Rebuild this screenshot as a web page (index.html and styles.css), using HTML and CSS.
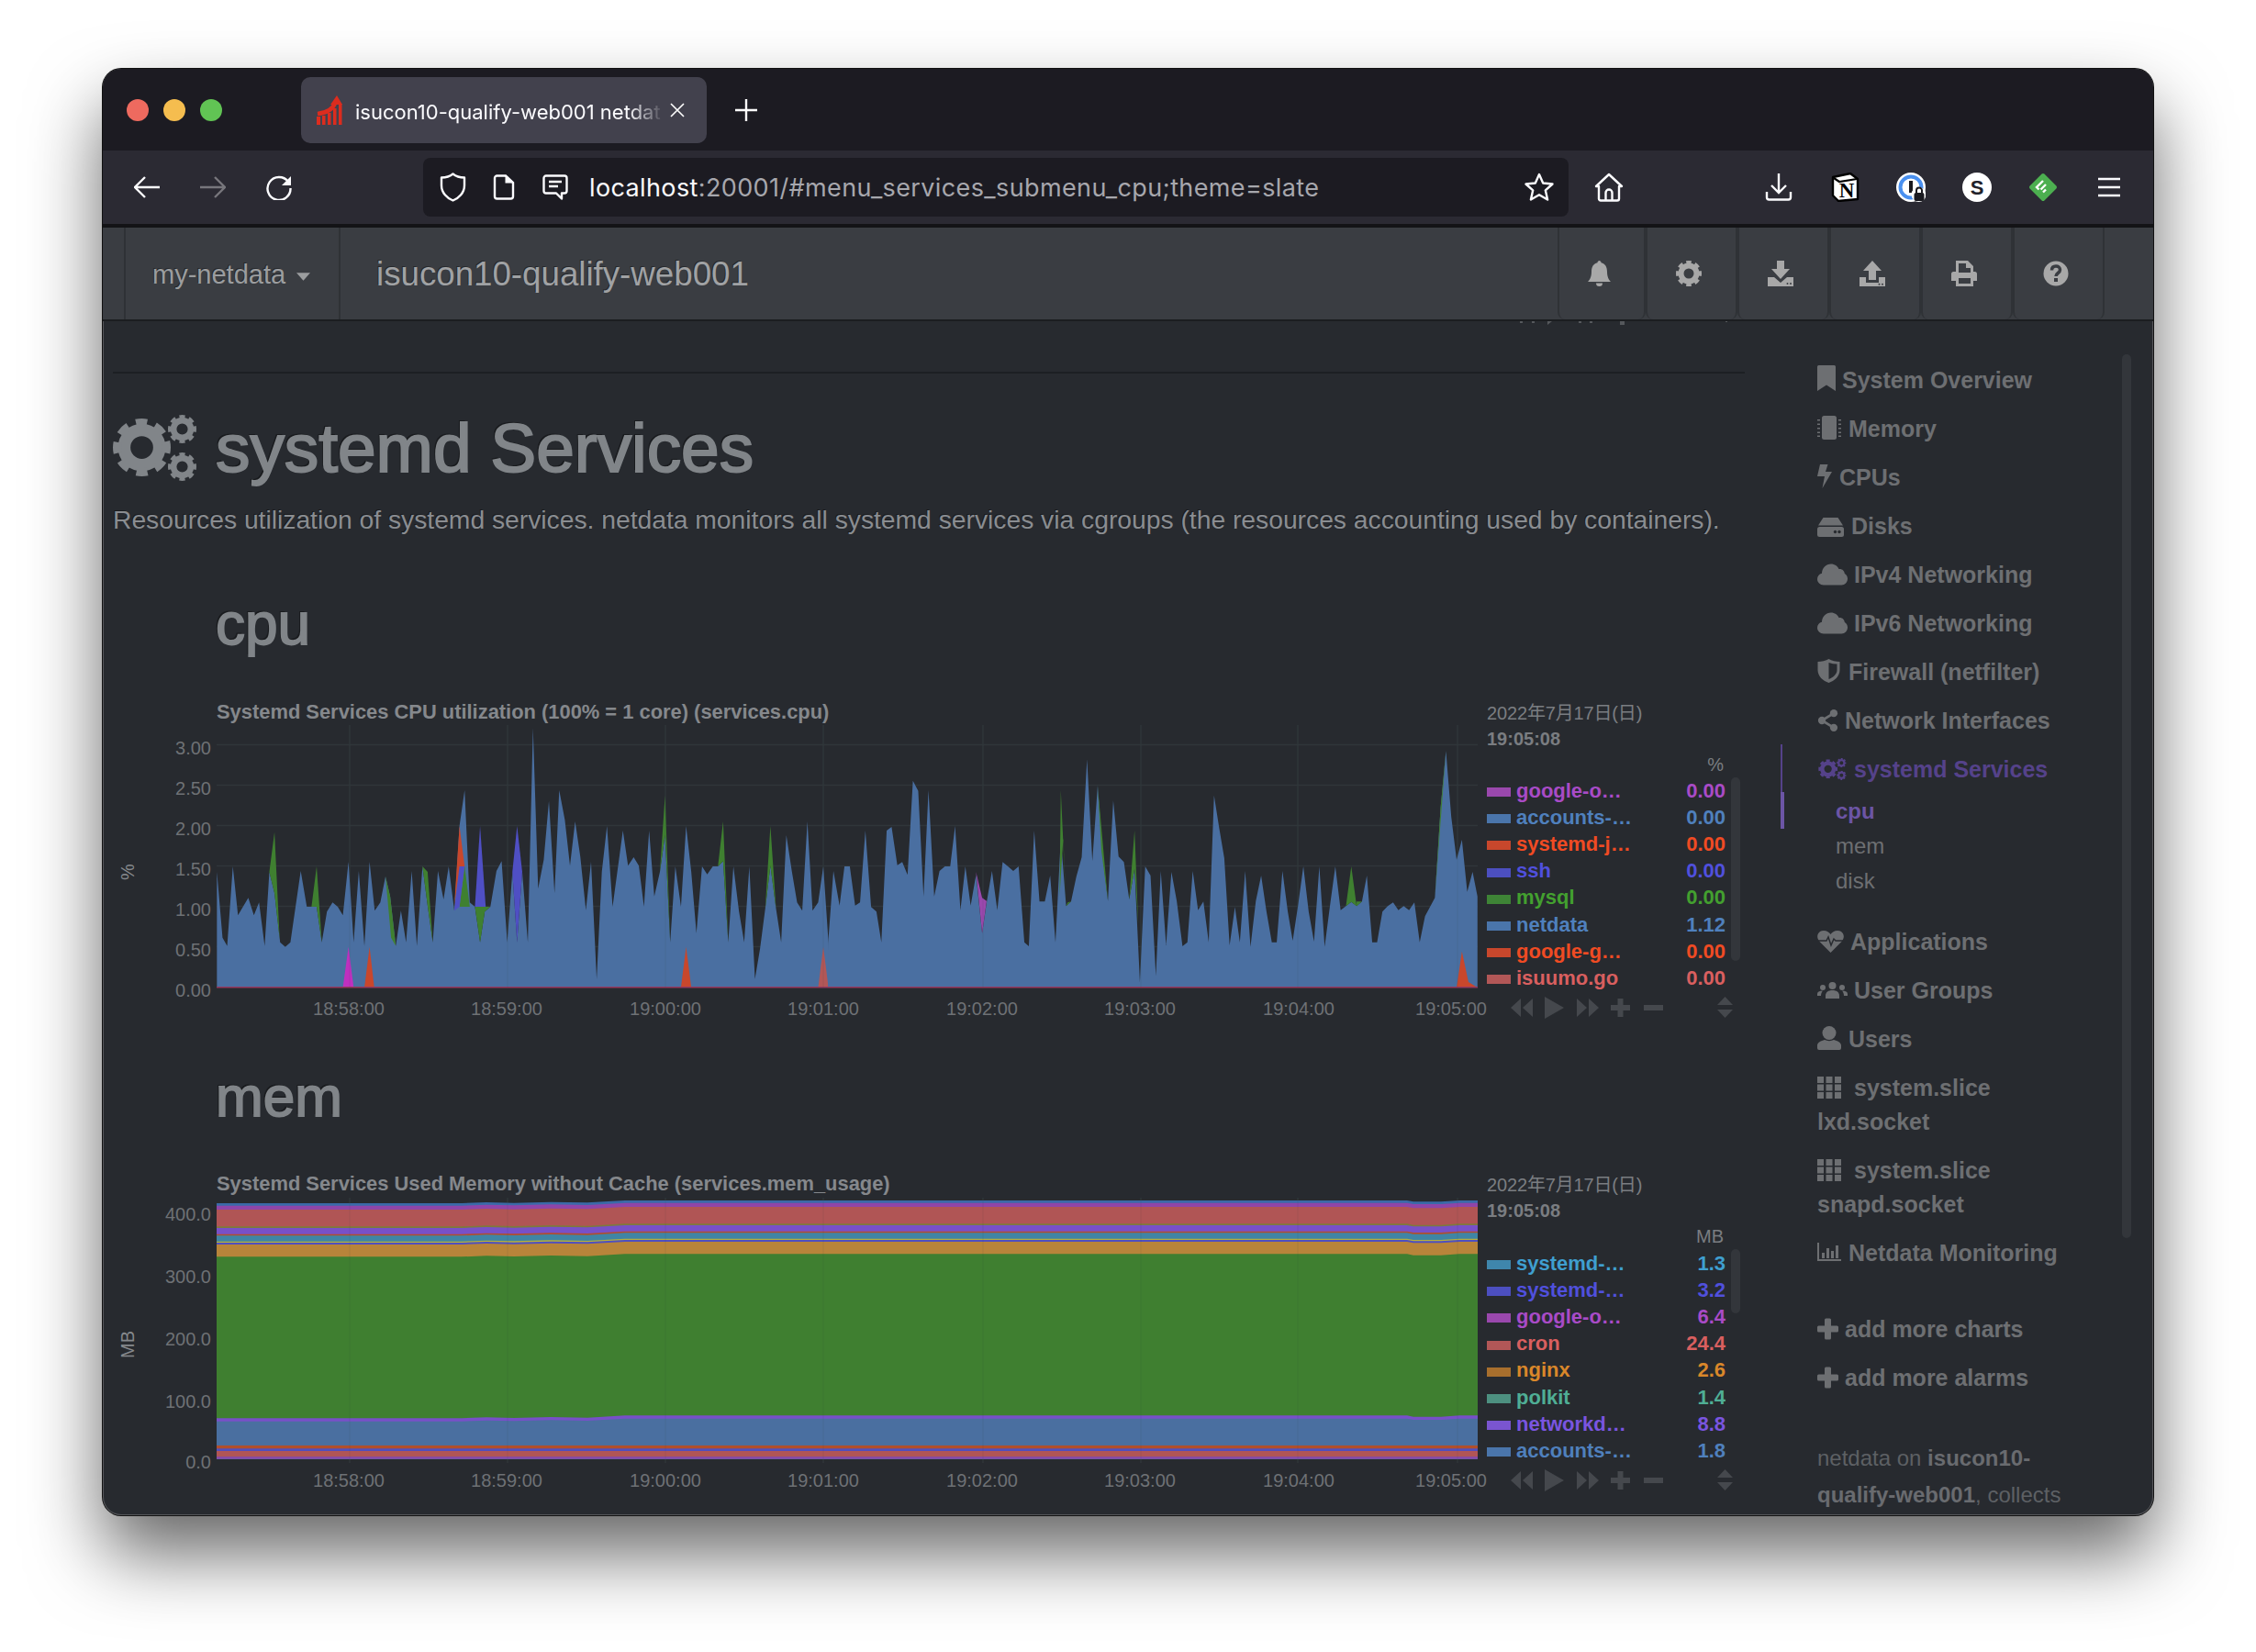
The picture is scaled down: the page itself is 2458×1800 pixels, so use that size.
FILE: index.html
```html
<!DOCTYPE html>
<html lang="en">
<head>
<meta charset="utf-8">
<title>isucon10-qualify-web001 netdata dashboard</title>
<link rel="stylesheet" href="styles.css">
</head>
<body>
<svg class="defs" xmlns="http://www.w3.org/2000/svg">
  <symbol id="i-cog" viewBox="0 0 28 28">
    <circle cx="14" cy="14" r="8.5" fill="none" stroke="currentColor" stroke-width="6"/>
    <circle cx="14" cy="14" r="12" fill="none" stroke="currentColor" stroke-width="4" pathLength="64" stroke-dasharray="4.6 3.4" stroke-dashoffset="2.3"/>
  </symbol>
  <symbol id="i-cogs" viewBox="0 0 92 72">
    <use href="#i-cog" x="0" y="4" width="63" height="63"/>
    <use href="#i-cog" x="59" y="0" width="33" height="31"/>
    <use href="#i-cog" x="59" y="41" width="33" height="31"/>
  </symbol>
  <symbol id="i-bookmark" viewBox="0 0 20 28"><path fill="currentColor" d="M0 1.5A1.5 1.5 0 0 1 1.500 0h17A1.500 1.500 0 0 1 20 1.500V28l-10-6.500L0 28z"/></symbol>
  <symbol id="i-chip" viewBox="0 0 26 26"><rect x="5" y="0" width="16" height="26" rx="2.500" fill="currentColor"/><path fill="currentColor" d="M0 4h3v1.500H0zM0 8.500h3V10H0zM0 13h3v1.500H0zM0 17.500h3V19H0zM0 21.500h3V23H0zM23 4h3v1.500h-3zM23 8.500h3V10h-3zM23 13h3v1.500h-3zM23 17.500h3V19h-3zM23 21.500h3V23h-3z"/></symbol>
  <symbol id="i-bolt" viewBox="0 0 16 26"><path fill="currentColor" d="M3 0h8.500L9 8h7L5.500 26 8 13H0z"/></symbol>
  <symbol id="i-hdd" viewBox="0 0 29 21"><path fill="currentColor" d="M6.500 0h16L28 8.500H1z"/><rect y="10" width="29" height="11" rx="2.500" fill="currentColor"/><circle cx="19.500" cy="15.500" r="1.700" fill="#272a2f"/><circle cx="24" cy="15.500" r="1.700" fill="#272a2f"/></symbol>
  <symbol id="i-cloud" viewBox="0 0 33 23"><path fill="currentColor" d="M7 23C3 23 0 20 0 16.500 0 13.500 2 11 5 10.300 5 4.500 9.500 0 15 0c4 0 7 2.300 8.500 5.500 3.500-.5 6 1.800 6.300 5C31.700 11.500 33 13.500 33 16c0 4-3 7-6.500 7z"/></symbol>
  <symbol id="i-shield" viewBox="0 0 24 26"><path fill="currentColor" fill-rule="evenodd" d="M12 0c3 2 8 3 12 3v9c0 7-6 12-12 14C6 24 0 19 0 12V3c4 0 9-1 12-3zm0 4v18c5-2 9-5.500 9-10V5.500c-3 0-6-.5-9-1.500z"/></symbol>
  <symbol id="i-share" viewBox="0 0 23 26"><circle cx="18.500" cy="4.500" r="4.500" fill="currentColor"/><circle cx="4.500" cy="13" r="4.500" fill="currentColor"/><circle cx="18.500" cy="21.500" r="4.500" fill="currentColor"/><path d="M18.500 4.500 4.500 13l14 8.500" fill="none" stroke="currentColor" stroke-width="3"/></symbol>
  <symbol id="i-heart" viewBox="0 0 29 24"><path fill="currentColor" d="M14.500 24 2 11.500C-2 6 1 0 7 0c3.500 0 6 2 7.500 4C16 2 18.500 0 22 0c6 0 9 6 5 11.500z"/><path d="M1 11h9l2-4 3 9 3-7 2 2h8" fill="none" stroke="#272a2f" stroke-width="1.500"/></symbol>
  <symbol id="i-users" viewBox="0 0 33 18"><g fill="currentColor"><circle cx="16.500" cy="4" r="4"/><path d="M9 18v-3c0-4 3-6 7.500-6S24 11 24 15v3z"/><circle cx="6" cy="6" r="3"/><path d="M0 15v-2c0-2 2-3.500 6-3.500-1 1-2 3-2 5.500z"/><circle cx="27" cy="6" r="3"/><path d="M33 15v-2c0-2-2-3.500-6-3.500 1 1 2 3 2 5.500z"/></g></symbol>
  <symbol id="i-user" viewBox="0 0 26 26"><g fill="currentColor"><circle cx="13" cy="7.500" r="7.500"/><path d="M0 24v-3c0-3 4-5 8-6 3 1.500 7 1.500 10 0 4 1 8 3 8 6v3a2 2 0 0 1-2 2H2a2 2 0 0 1-2-2z"/></g></symbol>
  <symbol id="i-th" viewBox="0 0 26 24"><path fill="currentColor" d="M0 0h7v7H0zM9.500 0h7v7h-7zM19 0h7v7h-7zM0 8.500h7v7H0zM9.500 8.500h7v7h-7zM19 8.500h7v7h-7zM0 17h7v7H0zM9.500 17h7v7h-7zM19 17h7v7h-7z"/></symbol>
  <symbol id="i-bars" viewBox="0 0 26 20"><path fill="currentColor" d="M0 0h2v18h24v2H0zM5 11h3v6H5zM10 6h3v11h-3zM15 9h3v8h-3zM20 3h3v14h-3z"/></symbol>
  <symbol id="i-plus" viewBox="0 0 23 23"><path fill="currentColor" d="M8 1.500A1.500 1.500 0 0 1 9.500 0h4A1.500 1.500 0 0 1 15 1.500V8h6.500A1.500 1.500 0 0 1 23 9.500v4a1.500 1.500 0 0 1-1.500 1.500H15v6.500a1.500 1.500 0 0 1-1.500 1.500h-4A1.500 1.500 0 0 1 8 21.500V15H1.500A1.500 1.500 0 0 1 0 13.500v-4A1.500 1.500 0 0 1 1.500 8H8z"/></symbol>
  <symbol id="i-bell" viewBox="0 0 25 28"><path fill="currentColor" d="M12.500 0c1 0 2 1 2 2.200C19 3 21 7 21 12c0 6 2 9 4 11H0c2-2 4-5 4-11C4 7 6 3 10.500 2.200 10.500 1 11.500 0 12.500 0zM9 24.500h7a3.500 3.500 0 0 1-7 0z"/></symbol>
  <symbol id="i-down" viewBox="0 0 28 28"><path fill="currentColor" d="M10 0h8v9h6L14 20 4 9h6zM0 18h7l7 6 7-6h7v10H0z"/><circle cx="21.500" cy="25" r="1" fill="#3a3d42"/><circle cx="25" cy="25" r="1" fill="#3a3d42"/></symbol>
  <symbol id="i-up" viewBox="0 0 28 28"><path fill="currentColor" d="M14 0l10 11h-6v10h-8V11H4zM0 18h7v6h14v-6h7v10H0z"/><circle cx="21.500" cy="25.800" r="1" fill="#3a3d42"/><circle cx="25" cy="25.800" r="1" fill="#3a3d42"/></symbol>
  <symbol id="i-print" viewBox="0 0 28 28"><path fill="currentColor" fill-rule="evenodd" d="M5 0h13l6 6v6h1.500A2.500 2.500 0 0 1 28 14.500V22h-4v6H5v-6H0v-7.500A2.500 2.500 0 0 1 2.500 12H5zm3 3v10h13V8h-5V3zm0 16v6h13v-6z"/></symbol>
  <symbol id="i-help" viewBox="0 0 27 28"><circle cx="13.500" cy="14" r="13.500" fill="currentColor"/><path d="M9 10.500c0-3 2-4.500 4.500-4.500S18 7.500 18 10c0 3.500-4.500 3.500-4.500 7" fill="none" stroke="#3a3d42" stroke-width="3.500"/><rect x="11.500" y="19" width="4" height="4" fill="#3a3d42"/></symbol>
  <symbol id="i-tools" viewBox="0 0 270 24"><path fill="currentColor" d="M37 2 26 12l11 10zM50 2 39 12l11 10zM63 0l21 12-21 12zM98 2l11 10-11 10zM111 2l11 10-11 10zM142.500 2h6v7h7.500v6h-7.500v7h-6v-7H135V9h7.500zM171 9h21v6h-21zM259.500 0 268 9h-17zM251 14h17l-8.500 9z"/></symbol>
</svg>

<div class="window">
  <div class="tabbar">
    <div class="lights"><span class="light red"></span><span class="light yellow"></span><span class="light green"></span></div>
    <div class="tab">
      <svg class="favicon" viewBox="0 0 28 32"><path fill="#dc2c1e" d="M0 23h4v9H0zM6 22h3.500v10H6zM12 19h3.500v13H12zM18 14h3.500v18H18zM24 9h3.500v23H24z"/><path fill="none" stroke="#dc2c1e" stroke-width="4.500" d="M1 20c10-1 17-5 19.500-13"/><path fill="#dc2c1e" d="M22 0l6 10H15z"/></svg>
      <span class="tab-title">isucon10-qualify-web001 netdat</span>
      <svg class="tab-close" viewBox="0 0 16 16"><path d="M1 1l14 14M15 1 1 15" stroke="#fff" stroke-width="1.600" fill="none"/></svg>
    </div>
    <svg class="newtab" viewBox="0 0 24 24"><path d="M12 0v24M0 12h24" stroke="#fff" stroke-width="2.400"/></svg>
  </div>

  <div class="toolbar">
    <span class="tbtn"><svg class="s28" viewBox="0 0 28 24"><path d="M1 12h27M12 1 1 12l11 11" fill="none" stroke="#fbfbfe" stroke-width="2.400"/></svg></span>
    <span class="tbtn"><svg class="s28" viewBox="0 0 28 24"><path d="M0 12h27M16 1l11 11-11 11" fill="none" stroke="#77767c" stroke-width="2.400"/></svg></span>
    <span class="tbtn"><svg class="s28" viewBox="0 0 28 28"><path d="M24 8A12.500 12.500 0 1 0 26.500 15" fill="none" stroke="#fbfbfe" stroke-width="2.400"/><path d="M27 2v10H17z" fill="#fbfbfe"/></svg></span>
    <div class="urlbar">
      <span class="ubtn"><svg class="s-shield" viewBox="0 0 29 32"><path d="M14.500 1.500c3 2.500 8 4 12.500 4V14c0 8-6 14-12.500 16.500C8 28 2 22 2 14V5.500c4.500 0 9.500-1.500 12.500-4z" fill="none" stroke="#fbfbfe" stroke-width="2.400" stroke-linejoin="round"/></svg></span>
      <span class="ubtn"><svg class="s-page" viewBox="0 0 24 28"><path d="M2 4a2.500 2.500 0 0 1 2.500-2.500H14L22 9v15a2.500 2.500 0 0 1-2.500 2.500h-15A2.500 2.500 0 0 1 2 24z" fill="none" stroke="#fbfbfe" stroke-width="2.400"/><path d="M13.500 1.500 22 9.500h-8.500z" fill="#fbfbfe"/></svg></span>
      <span class="ubtn"><svg class="s-page2" viewBox="0 0 28 28"><path d="M4 1.500h20A2.500 2.500 0 0 1 26.500 4v14a2.500 2.500 0 0 1-2.500 2.500h-3v6l-6-6H4A2.500 2.500 0 0 1 1.500 18V4A2.500 2.500 0 0 1 4 1.500z" fill="none" stroke="#fbfbfe" stroke-width="2.400" stroke-linejoin="round"/><path d="M7 8h14M7 13h10" stroke="#fbfbfe" stroke-width="2.400"/></svg></span>
      <span class="url"><span class="url-host">localhost</span>:20001/#menu_services_submenu_cpu;theme=slate</span>
      <span class="ubtn"><svg class="s-star" viewBox="0 0 32 32"><path d="M16 2l4.200 9.500 10.300 1-7.700 6.800 2.300 10.200-9.100-5.300-9.100 5.300 2.300-10.200-7.700-6.800 10.300-1z" fill="none" stroke="#fbfbfe" stroke-width="2.400" stroke-linejoin="round"/></svg></span>
    </div>
    <span class="tbtn home"><svg class="s-star" viewBox="0 0 32 32"><path d="M16 2 30 15h-3v13.500a2 2 0 0 1-2 2H7a2 2 0 0 1-2-2V15H2z" fill="none" stroke="#fbfbfe" stroke-width="2.400" stroke-linejoin="round"/><path d="M12.500 30v-8a3.500 3.500 0 0 1 7 0v8" fill="none" stroke="#fbfbfe" stroke-width="2.400"/></svg></span>
    <span class="spacer"></span>
    <span class="tbtn"><svg class="s-star" viewBox="0 0 32 32"><path d="M16 1v21M8 14l8 8 8-8" fill="none" stroke="#fbfbfe" stroke-width="2.400"/><path d="M3 21v6a2.500 2.500 0 0 0 2.500 2.500h21A2.500 2.500 0 0 0 29 27v-6" fill="none" stroke="#fbfbfe" stroke-width="2.400"/></svg></span>
    <span class="tbtn"><svg class="s-star" viewBox="0 0 32 32"><path d="M3 5 22 1l8 6v22L9 31l-6-6z" fill="#fff" stroke="#000" stroke-width="2.400" stroke-linejoin="round"/><path d="M4 6l6 4 19-3" fill="none" stroke="#000" stroke-width="2.200"/><text class="notion-n" x="18" y="27" text-anchor="middle">N</text></svg></span>
    <span class="tbtn"><svg class="s-star" viewBox="0 0 32 32"><circle cx="16" cy="16" r="16" fill="#fff"/><circle cx="16" cy="16" r="11.500" fill="none" stroke="#4a90f0" stroke-width="4"/><rect x="14" y="9" width="4" height="13" fill="#1a1a20"/><circle cx="24.500" cy="24" r="8" fill="#fff"/><rect x="19.500" y="22" width="11" height="9" rx="2" fill="#1a1a20"/><path d="M22 22v-2.500a3 3 0 0 1 6 0V22" fill="none" stroke="#1a1a20" stroke-width="2"/></svg></span>
    <span class="tbtn"><svg class="s-star" viewBox="0 0 32 32"><circle cx="16" cy="16" r="16" fill="#fff"/><text class="s-glyph" x="16" y="23.500" text-anchor="middle">S</text></svg></span>
    <span class="tbtn"><svg class="s-star" viewBox="0 0 32 32"><path d="M16 3 29 16 16 29 3 16z" fill="#4caf50" stroke="#4caf50" stroke-width="4" stroke-linejoin="round"/><path d="M16 9l-7 7 2.500 2.500M19 13l-5.500 5.500M19 18.500l-3 3" fill="none" stroke="#fff" stroke-width="2.400"/></svg></span>
    <span class="tbtn"><svg class="s28" viewBox="0 0 28 24"><path d="M2 3h24M2 12h24M2 21h24" stroke="#fbfbfe" stroke-width="2.600"/></svg></span>
  </div>

  <nav class="navbar">
    <div class="brand">my-netdata<svg class="caret" viewBox="0 0 16 9"><path d="M0 0h16L8 9z" fill="currentColor"/></svg></div>
    <div class="hostname">isucon10-qualify-web001</div>
    <div class="navbtns">
      <span class="navbtn first"><svg class="ni ni-25"><use href="#i-bell"/></svg></span>
      <span class="navbtn"><svg class="ni"><use href="#i-cog"/></svg></span>
      <span class="navbtn"><svg class="ni"><use href="#i-down"/></svg></span>
      <span class="navbtn"><svg class="ni"><use href="#i-up"/></svg></span>
      <span class="navbtn"><svg class="ni"><use href="#i-print"/></svg></span>
      <span class="navbtn"><svg class="ni"><use href="#i-help"/></svg></span>
    </div>
  </nav>

  <div class="content">
    <main class="main">
      <svg class="clipped-bits" viewBox="0 0 240 5"><path fill="#55585c" d="M6 0h3v2H6zM19 0h3v2h-3zM36 0h5l-5 4zM70 0h3v2h-3zM82 0h3v2h-3zM115 0h5v4h-5zM230 0h2v1h-2z"/></svg>
      <hr class="rule">
      <h1 class="page-title"><svg class="cogs"><use href="#i-cogs"/></svg><span>systemd Services</span></h1>
      <p class="lead">Resources utilization of systemd services. netdata monitors all systemd services via cgroups (the resources accounting used by containers).</p>

      <h2 class="section">cpu</h2>
      <section class="chart">
        <div class="plot">
          <div class="chart-title">Systemd Services CPU utilization (100% = 1 core) (services.cpu)</div>
          <svg class="graph" viewBox="112 790 1508 320">
            <g class="grid">
              <path d="M236 811.500H1610M236 855.500H1610M236 899.500H1610M236 943.500H1610M236 987.500H1610M236 1031.500H1610M381 790V1076M553 790V1076M725 790V1076M897 790V1076M1071 790V1076M1243 790V1076M1414 790V1076M1588 790V1076"/>
            </g>
            <g transform="translate(120,760) scale(.5102,.3333)">
              <polygon class="f-blue" points="228,948 228,570 240,785 250,812 262,552 273,712 295,655 307,712 318,670 330,812 340,570 351,640 363,800 374,815 385,800 407,567 420,684 441,684 452,800 463,700 475,670 486,684 497,712 509,537 520,800 531,567 543,812 554,537 565,697 577,670 588,585 598,650 610,812 621,697 632,800 644,567 655,812 667,552 678,680 689,800 700,567 712,660 723,552 735,697 746,420 757,303 768,670 779,684 790,800 800,700 812,684 825,567 836,535 848,800 859,570 869,800 880,570 892,800 903,100 914,625 926,530 937,338 949,640 959,303 971,400 982,550 993,405 1004,520 1016,695 1027,537 1039,920 1050,570 1061,420 1073,684 1095,435 1106,550 1118,522 1129,550 1140,684 1151,435 1162,650 1174,570 1185,450 1196,800 1207,552 1219,684 1230,420 1241,570 1252,770 1264,552 1275,578 1287,552 1298,552 1309,535 1320,800 1331,552 1343,700 1354,800 1365,552 1377,920 1388,820 1399,690 1410,550 1422,690 1433,800 1444,450 1456,570 1467,670 1478,697 1489,405 1500,697 1512,670 1523,552 1534,800 1538,948"/>
              <polygon class="f-green" points="340,570 351,440 362,790 351,640"/>
              <polygon class="f-green" points="430,684 441,552 452,800 441,684"/>
              <polygon class="f-green" points="588,585 598,650 610,812 600,785"/>
              <polygon class="f-green" points="667,552 678,570 689,800 678,680"/>
              <polygon class="f-green" points="746,684 757,552 768,684"/>
              <polygon class="f-green" points="779,684 812,684 800,700 790,800"/>
              <polygon class="f-green" points="1174,570 1185,320 1196,800 1185,450"/>
              <polygon class="f-green" points="1298,552 1309,405 1320,800 1309,535"/>
              <polygon class="f-green" points="1399,690 1410,420 1422,690 1410,550"/>
              <polygon class="f-violet" points="779,684 790,420 802,684"/>
              <polygon class="f-violet" points="859,570 869,420 880,570 869,800"/>
              <polygon class="f-violet" points="735,697 746,552 757,552 746,684"/>
              <polygon class="f-red" points="735,680 746,420 757,552 746,552"/>
              <polygon class="f-magenta" points="497,948 509,815 520,948"/>
              <polygon class="f-red" points="543,948 554,815 564,948"/>
              <polygon class="f-red" points="1219,948 1230,815 1241,948"/>
              <polygon class="f-rose" points="1512,948 1523,815 1534,948"/>
            </g>
            <g transform="translate(900,780) scale(.4464,.3333)">
              <polygon class="f-blue" points="5,888 5,745 18,507 33,620 45,492 58,492 71,620 83,610 96,375 110,625 123,640 135,740 148,375 160,363 174,488 186,478 199,520 212,212 225,245 238,590 250,243 264,590 277,507 290,492 303,492 315,360 328,635 340,492 353,620 366,520 381,710 392,610 405,507 418,635 431,478 444,492 457,507 470,492 484,740 495,753 508,375 521,607 534,607 547,522 560,740 573,400 586,622 598,607 611,525 624,462 637,142 650,475 663,228 675,450 688,605 701,277 714,460 727,478 740,600 753,500 766,870 779,492 792,522 805,850 817,507 830,750 843,510 856,605 870,753 882,740 895,507 908,635 921,607 934,740 947,260 960,370 972,465 985,750 998,625 1010,740 1023,507 1036,755 1049,605 1062,522 1075,640 1088,740 1100,740 1114,507 1127,640 1139,735 1152,620 1165,492 1178,640 1191,738 1204,492 1217,755 1230,620 1243,492 1256,635 1269,622 1282,608 1295,622 1308,607 1320,522 1333,740 1345,740 1358,640 1371,622 1384,610 1397,635 1410,622 1423,635 1436,610 1449,740 1462,655 1486,595 1500,300 1513,115 1526,330 1539,470 1552,405 1565,575 1578,510 1590,590 1590,888"/>
              <polygon class="f-green" points="570,590 573,243 586,622 579,400"/>
              <polygon class="f-green" points="663,228 688,605 672,440"/>
              <polygon class="f-green" points="740,600 753,375 762,680 753,500"/>
              <polygon class="f-green" points="1269,622 1282,492 1295,622 1282,608"/>
              <polygon class="f-green" points="1295,622 1295,607 1308,607"/>
              <polygon class="f-green" points="586,622 590,610 598,607"/>
              <polygon class="f-green" points="1486,595 1513,115 1500,300"/>
              <polygon class="f-violet2" points="366,510 381,595 392,605 381,710"/>
              <polygon class="f-red" points="1539,888 1552,770 1568,870 1590,888"/>
            </g>
            <rect class="zero-line" x="236" y="1075" width="1374" height="1.500"/>
            <g class="grid grid-over"><path d="M381 790V1076M553 790V1076M725 790V1076M897 790V1076M1071 790V1076M1243 790V1076M1414 790V1076M1588 790V1076"/></g>
            <g class="ax">
              <text class="ax-y" x="230" y="822">3.00</text><text class="ax-y" x="230" y="866">2.50</text><text class="ax-y" x="230" y="910">2.00</text><text class="ax-y" x="230" y="954">1.50</text><text class="ax-y" x="230" y="998">1.00</text><text class="ax-y" x="230" y="1042">0.50</text><text class="ax-y" x="230" y="1086">0.00</text>
              <text class="ax-x" x="380" y="1106">18:58:00</text><text class="ax-x" x="552" y="1106">18:59:00</text><text class="ax-x" x="725" y="1106">19:00:00</text><text class="ax-x" x="897" y="1106">19:01:00</text><text class="ax-x" x="1070" y="1106">19:02:00</text><text class="ax-x" x="1242" y="1106">19:03:00</text><text class="ax-x" x="1415" y="1106">19:04:00</text><text class="ax-x" x="1581" y="1106">19:05:00</text>
              <text class="ax-unit" transform="translate(146,950) rotate(-90)">%</text>
            </g>
          </svg>
        </div>
        <aside class="legend">
          <div class="legend-date">2022年7月17日(日)</div>
          <div class="legend-time">19:05:08</div>
          <div class="legend-unit">%</div>
          <div class="legend-rows">
            <div class="row c-google"><i></i><span>google-o…</span><b>0.00</b></div>
            <div class="row c-blue"><i></i><span>accounts-…</span><b>0.00</b></div>
            <div class="row c-red"><i></i><span>systemd-j…</span><b>0.00</b></div>
            <div class="row c-indigo"><i></i><span>ssh</span><b>0.00</b></div>
            <div class="row c-green"><i></i><span>mysql</span><b>0.00</b></div>
            <div class="row c-blue"><i></i><span>netdata</span><b>1.12</b></div>
            <div class="row c-red"><i></i><span>google-g…</span><b>0.00</b></div>
            <div class="row c-rose"><i></i><span>isuumo.go</span><b>0.00</b></div>
          </div>
          <svg class="tools"><use href="#i-tools"/></svg>
          <span class="legend-scroll tall"></span>
        </aside>
      </section>

      <h2 class="section">mem</h2>
      <section class="chart">
        <div class="plot">
          <div class="chart-title">Systemd Services Used Memory without Cache (services.mem_usage)</div>
          <svg class="graph" viewBox="112 1305 1508 320">
            <defs>
              <clipPath id="memclip"><rect x="236" y="0" width="1374" height="932"/></clipPath>
              <polygon id="band" points="236,9 503,9 530,6 560,8 600,5 640,7 681,0 1533,0 1540,4 1570,4 1590,0 1610,0 1610,1000 236,1000"/>
            </defs>
            <g class="grid"><path d="M381 1306V1595M553 1306V1595M725 1306V1595M897 1306V1595M1071 1306V1595M1243 1306V1595M1414 1306V1595M1588 1306V1595"/></g>
            <g transform="translate(0,1280) scale(1,.3333)">
              <g clip-path="url(#memclip)">
                <use href="#band" y="87" class="b1"/>
                <use href="#band" y="95" class="b2"/>
                <use href="#band" y="108" class="b3"/>
                <use href="#band" y="163" class="b4"/>
                <use href="#band" y="168" class="b5"/>
                <use href="#band" y="188" class="b6"/>
                <use href="#band" y="193" class="b7"/>
                <use href="#band" y="212" class="b8"/>
                <use href="#band" y="216" class="b9"/>
                <use href="#band" y="222" class="b10"/>
                <use href="#band" y="262" class="b11"/>
                <use href="#band" y="790" class="b5"/>
                <use href="#band" y="800" class="b12"/>
                <rect class="b6" x="236" y="888" width="1374" height="12"/>
                <rect class="b9" x="236" y="898" width="1374" height="8"/>
                <rect class="b3" x="236" y="906" width="1374" height="19"/>
                <rect class="b2" x="236" y="925" width="1374" height="7"/>
              </g>
            </g>
            <g class="grid grid-over"><path d="M381 1306V1591M553 1306V1591M725 1306V1591M897 1306V1591M1071 1306V1591M1243 1306V1591M1414 1306V1591M1588 1306V1591"/></g>
            <g class="ax">
              <text class="ax-y" x="230" y="1331">400.0</text><text class="ax-y" x="230" y="1399">300.0</text><text class="ax-y" x="230" y="1467">200.0</text><text class="ax-y" x="230" y="1535">100.0</text><text class="ax-y" x="230" y="1601">0.0</text>
              <text class="ax-x" x="380" y="1621">18:58:00</text><text class="ax-x" x="552" y="1621">18:59:00</text><text class="ax-x" x="725" y="1621">19:00:00</text><text class="ax-x" x="897" y="1621">19:01:00</text><text class="ax-x" x="1070" y="1621">19:02:00</text><text class="ax-x" x="1242" y="1621">19:03:00</text><text class="ax-x" x="1415" y="1621">19:04:00</text><text class="ax-x" x="1581" y="1621">19:05:00</text>
              <text class="ax-unit" transform="translate(146,1466) rotate(-90)">MB</text>
            </g>
          </svg>
        </div>
        <aside class="legend">
          <div class="legend-date">2022年7月17日(日)</div>
          <div class="legend-time">19:05:08</div>
          <div class="legend-unit">MB</div>
          <div class="legend-rows">
            <div class="row c-sky"><i></i><span>systemd-…</span><b>1.3</b></div>
            <div class="row c-indigo"><i></i><span>systemd-…</span><b>3.2</b></div>
            <div class="row c-google"><i></i><span>google-o…</span><b>6.4</b></div>
            <div class="row c-rose"><i></i><span>cron</span><b>24.4</b></div>
            <div class="row c-orange"><i></i><span>nginx</span><b>2.6</b></div>
            <div class="row c-teal"><i></i><span>polkit</span><b>1.4</b></div>
            <div class="row c-violet"><i></i><span>networkd…</span><b>8.8</b></div>
            <div class="row c-blue"><i></i><span>accounts-…</span><b>1.8</b></div>
          </div>
          <svg class="tools"><use href="#i-tools"/></svg>
          <span class="legend-scroll short"></span>
        </aside>
      </section>
    </main>

    <aside class="sidebar">
      <span class="side-track"></span>
      <span class="side-mark"></span>
      <ul class="side-list">
        <li><svg class="si w20"><use href="#i-bookmark"/></svg>System Overview</li>
        <li><svg class="si w26"><use href="#i-chip"/></svg>Memory</li>
        <li><svg class="si w16"><use href="#i-bolt"/></svg>CPUs</li>
        <li><svg class="si w29"><use href="#i-hdd"/></svg>Disks</li>
        <li><svg class="si w33"><use href="#i-cloud"/></svg>IPv4 Networking</li>
        <li><svg class="si w33"><use href="#i-cloud"/></svg>IPv6 Networking</li>
        <li><svg class="si w24"><use href="#i-shield"/></svg>Firewall (netfilter)</li>
        <li><svg class="si w23"><use href="#i-share"/></svg>Network Interfaces</li>
        <li class="active"><svg class="si w33"><use href="#i-cogs"/></svg>systemd Services</li>
        <li class="sub sub-active">cpu</li>
        <li class="sub">mem</li>
        <li class="sub sub-last">disk</li>
        <li><svg class="si w29h"><use href="#i-heart"/></svg>Applications</li>
        <li><svg class="si w33"><use href="#i-users"/></svg>User Groups</li>
        <li><svg class="si w26"><use href="#i-user"/></svg>Users</li>
        <li class="slice"><svg class="si w26t"><use href="#i-th"/></svg>system.slice<br>lxd.socket</li>
        <li class="slice"><svg class="si w26t"><use href="#i-th"/></svg>system.slice<br>snapd.socket</li>
        <li class="mon"><svg class="si w26"><use href="#i-bars"/></svg>Netdata Monitoring</li>
        <li class="add"><svg class="si w23"><use href="#i-plus"/></svg>add more charts</li>
        <li><svg class="si w23"><use href="#i-plus"/></svg>add more alarms</li>
      </ul>
      <p class="side-foot">netdata on <b>isucon10-<br>qualify-web001</b>, collects</p>
    </aside>
  </div>
</div>
</body>
</html>
```

FILE: styles.css
```css
* { box-sizing: border-box; }
html, body { margin: 0; padding: 0; }
body {
  background: #fff;
  width: 2458px;
  height: 1800px;
  padding: 75px 112px 0;
  font-family: "Liberation Sans", Arial, sans-serif;
  overflow: hidden;
}
.defs { display: none; }

.window {
  width: 2234px;
  height: 1576px;
  border-radius: 20px;
  overflow: hidden;
  background: #272a2f;
  box-shadow: 0 0 0 1px #111, inset 0 0 0 1px #55565a, 0 42px 80px rgba(0,0,0,.6);
  display: flex;
  flex-direction: column;
  position: relative;
}

/* tab strip */
.tabbar { height: 89px; background: #1c1b22; display: flex; align-items: flex-start; flex: none; }
.lights { display: flex; gap: 16px; margin: 33px 0 0 26px; }
.light { width: 24px; height: 24px; border-radius: 50%; }
.light.red { background: #ee6a5f; }
.light.yellow { background: #f5bd4f; }
.light.green { background: #61c454; }
.tab {
  margin: 9px 0 0 86px;
  width: 442px; height: 72px;
  background: #42414d;
  border-radius: 10px;
  display: flex; align-items: center;
  padding-left: 17px;
}
.favicon { width: 28px; height: 32px; flex: none; }
.tab-title {
  margin: 3px 0 0 14px;
  width: 337px;
  flex: none;
  font: 400 22px/30px "Inter", sans-serif;
  color: #fbfbfe;
  white-space: nowrap;
  -webkit-mask-image: linear-gradient(90deg, #000 88%, transparent);
  mask-image: linear-gradient(90deg, #000 88%, transparent);
}
.tab-close { width: 16px; height: 16px; margin-left: 6px; flex: none; }
.newtab { width: 24px; height: 24px; margin: 33px 0 0 31px; }

/* browser toolbar */
.toolbar { height: 80px; background: #2b2a33; display: flex; align-items: center; padding: 0 12px; flex: none; }
.tbtn { width: 72px; height: 64px; display: flex; align-items: center; justify-content: center; flex: none; }
.home { margin-left: 8px; }
.spacer { flex: 1; }
.s28 { width: 28px; height: 28px; }
.urlbar {
  margin-left: 121px;
  width: 1248px; height: 64px;
  background: #1c1b22;
  border-radius: 8px;
  display: flex; align-items: center;
  padding: 0 4px;
}
.ubtn { width: 56px; height: 56px; display: flex; align-items: center; justify-content: center; flex: none; }
.s-shield { width: 29px; height: 32px; }
.s-page { width: 24px; height: 28px; }
.s-page2 { width: 28px; height: 28px; }
.s-star { width: 32px; height: 32px; }
.url {
  flex: 1;
  margin: 2px 0 0 9px;
  font: 400 27px/36px "Inter", sans-serif;
  letter-spacing: .38px;
  color: #a7a7ad;
  white-space: nowrap;
}
.url-host { color: #fbfbfe; }
.notion-n { font: 700 23px "Liberation Serif", serif; fill: #000; }
.s-glyph { font: 700 22px "Liberation Sans", sans-serif; fill: #22222a; }

/* netdata navbar */
.navbar {
  height: 102px;
  margin-top: 4px;
  background: #3a3d42;
  border-bottom: 2px solid #1b1d20;
  display: flex; align-items: stretch;
  padding-left: 23px;
  color: #a0a2a4;
  text-shadow: -1px -1px 0 rgba(0,0,0,.35);
  flex: none;
  box-shadow: 0 -4px 0 #131316;
}
.brand {
  width: 236px;
  border-left: 2px solid #2f3236;
  border-right: 2px solid #2f3236;
  padding: 2px 0 0 29px;
  font-size: 29px;
  display: flex; align-items: center;
  color: #9b9d9f;
}
.caret { width: 15px; height: 9px; margin: 4px 0 0 12px; }
.hostname {
  padding: 2px 0 0 39px;
  font-size: 36.700px;
  display: flex; align-items: center;
  flex: 1;
}
.navbtns { display: flex; padding-right: 53px; }
.navbtn {
  width: 100px; height: 100px;
  border: solid #2f3236;
  border-width: 0 2px;
  border-radius: 0 0 8px 8px;
  padding-right: 6px;
  display: flex; align-items: center; justify-content: center;
  color: #a8a8a8;
}
.navbtn.first { width: 96px; }
.ni { width: 28px; height: 28px; }
.ni-25 { width: 25px; }

/* content */
.content { flex: 1; display: flex; min-height: 0; position: relative; }
.main { width: 1828px; flex: none; position: relative; overflow: visible; }
.clipped-bits { position: absolute; left: 1538px; top: 0; width: 240px; height: 5px; }
.rule { height: 2px; border: 0; background: #1c1f23; margin: 55px 0 0 11px; width: 1778px; }
.page-title {
  margin: 41px 0 -1px 11px;
  height: 80px;
  display: flex; align-items: center; gap: 20px;
  font-size: 74.800px;
  font-weight: 400;
  color: #818589;
  -webkit-text-stroke: 2px #818589;
  text-shadow: -2px -2px 0 rgba(0,0,0,.35);
  white-space: nowrap;
}
.cogs { width: 92px; height: 72px; color: #818589; flex: none; }
.lead {
  margin: 20px 0 0 11px;
  font-size: 28.250px;
  line-height: 38px;
  padding-bottom: 2px;
  color: #8a8d91;
  text-shadow: -1px -1px 0 rgba(0,0,0,.35);
  white-space: nowrap;
}
.section {
  margin: 8px 0 0 123px;
  height: 168px;
  padding-top: 50px;
  font-size: 64px;
  font-weight: 400;
  line-height: 70px;
  color: #818589;
  -webkit-text-stroke: 1.800px #818589;
  text-shadow: -2px -2px 0 rgba(0,0,0,.35);
}
.section + .chart + .section { margin-top: -1.500px; padding-top: 51px; font-size: 62px; }
.section + .chart + .section + .chart .legend-rows { margin-top: 1.500px; }

.chart { display: flex; }
.plot { width: 1508px; flex: none; }
.chart-title {
  margin-left: 124px;
  height: 27px;
  line-height: 26px;
  font-size: 21.900px;
  font-weight: 700;
  color: #85888c;
  white-space: nowrap;
}
.graph { display: block; width: 1508px; height: 320px; overflow: visible; }
.grid path { fill: none; stroke: #30363a; stroke-width: 1.500; }
.grid-over path { stroke: rgba(40,50,60,.07); }
.f-blue { fill: #4a6fa1; }
.f-green { fill: #3f8030; }
.f-violet { fill: #4f4fc4; }
.f-violet2 { fill: #9a48ad; }
.f-red { fill: #c8472c; }
.f-magenta { fill: #bf30bf; }
.f-rose { fill: #b25757; }
.zero-line { fill: #96385f; }
.ax text { font-family: "Liberation Sans", sans-serif; font-size: 20px; fill: #6e7175; }
.ax-y { text-anchor: end; }
.ax-x { text-anchor: middle; }
.ax .ax-unit { text-anchor: middle; font-size: 20px; font-weight: 400; fill: #85888c; }

.b1 { fill: #3a6aa8; }
.b2 { fill: #8f45a8; }
.b3 { fill: #b05555; }
.b4 { fill: #7d7a3c; }
.b5 { fill: #7850c8; }
.b6 { fill: #b04f2c; }
.b7 { fill: #3f85a5; }
.b8 { fill: #b5b03c; }
.b9 { fill: #4f4fc0; }
.b10 { fill: #b8843a; }
.b11 { fill: #3f7f30; }
.b12 { fill: #4a6fa0; }

.legend { width: 260px; position: relative; flex: none; }
.legend-date { height: 28px; line-height: 28px; font-size: 20px; letter-spacing: -.15px; color: #7a7d81; font-family: "Liberation Sans", "Noto Sans CJK JP", sans-serif; white-space: nowrap; }
.legend-time { height: 28px; line-height: 28px; font-size: 20px; font-weight: 700; color: #7a7d81; }
.legend-unit { height: 28px; line-height: 28px; font-size: 20px; color: #7a7d81; text-align: right; padding-right: 2px; }
.row { height: 29.200px; display: flex; align-items: center; font-size: 22px; font-weight: 700; white-space: nowrap; }
.row i { width: 26px; height: 10px; margin: 3px 6px 0 0; flex: none; }
.row span { flex: 1; }
.row b { font-weight: 700; }
.c-google { color: #a94bc7; } .c-google i { background: #9a48ad; }
.c-blue { color: #4f80bd; } .c-blue i { background: #4a75ab; }
.c-red { color: #f04b23; } .c-red i { background: #c8472c; }
.c-indigo { color: #5050dd; } .c-indigo i { background: #4c4fc0; }
.c-green { color: #43a02f; } .c-green i { background: #3e8436; }
.c-rose { color: #d95f5f; } .c-rose i { background: #b25757; }
.c-sky { color: #3f9fd0; } .c-sky i { background: #3f86ac; }
.c-orange { color: #d9872a; } .c-orange i { background: #a86f2d; }
.c-teal { color: #4fae95; } .c-teal i { background: #4d9080; }
.c-violet { color: #7a55e0; } .c-violet i { background: #7a55d0; }
.tools { display: block; width: 270px; height: 24px; margin-top: 5px; color: #45484d; overflow: visible; }
.legend-scroll { position: absolute; left: 266px; width: 10px; border-radius: 5px; background: #33363b; }
.legend-scroll.tall { top: 84px; height: 200px; }
.legend-scroll.short { top: 84px; height: 70px; }

/* sidebar */
.sidebar { flex: 1; position: relative; padding: 37.500px 0 0 40px; overflow: hidden; }
.side-track { position: absolute; left: 372px; top: 36px; width: 10px; height: 963px; border-radius: 5px; background: #33363b; }
.side-mark { position: absolute; left: 0; top: 461px; width: 2px; height: 92px; background: #55428a; }
.side-mark::after { content: ""; position: absolute; left: 0; top: 52px; width: 4px; height: 40px; background: #6c55a5; }
.side-list { list-style: none; margin: 0; padding: 0; font-size: 25px; font-weight: 700; color: #6d6f72; }
.side-list li { line-height: 36px; padding: 8.500px 0; white-space: nowrap; }
.side-list .slice { line-height: 37px; padding: 8px 0; }
.si { display: inline-block; vertical-align: -3px; margin-right: 7px; color: #6d6f72; }
.w16 { width: 16px; height: 26px; margin-right: 8px; }
.w20 { width: 20px; height: 28px; margin-right: 7px; }
.w23 { width: 23px; height: 24px; }
.w24 { width: 25px; height: 26px; margin-right: 9px; }
.w26 { width: 26px; height: 26px; margin-right: 8px; }
.w29 { width: 29px; height: 21px; margin-right: 8px; }
.w29h { width: 29px; height: 24px; margin-right: 7px; }
.w33 { width: 33px; height: 24px; margin-right: 7px; }
.w26t { width: 26px; height: 24px; margin-right: 14px; }
.side-list .active, .active .si { color: #55428a; }
.side-list .sub { font-size: 24px; font-weight: 400; line-height: 38px; padding: 0 0 0 20px; color: #6d6f72; }
.side-list .sub-active { color: #6c55a5; font-weight: 700; }
.side-list .sub-last { margin-bottom: 21px; }
.side-list .mon { margin-top: 0; }
.side-list .add { margin-top: 30px; }
.side-foot { margin: 41px 0 0; font-size: 24px; line-height: 40px; color: #5d6064; white-space: nowrap; }
.side-foot b { color: #696b6f; }
```
